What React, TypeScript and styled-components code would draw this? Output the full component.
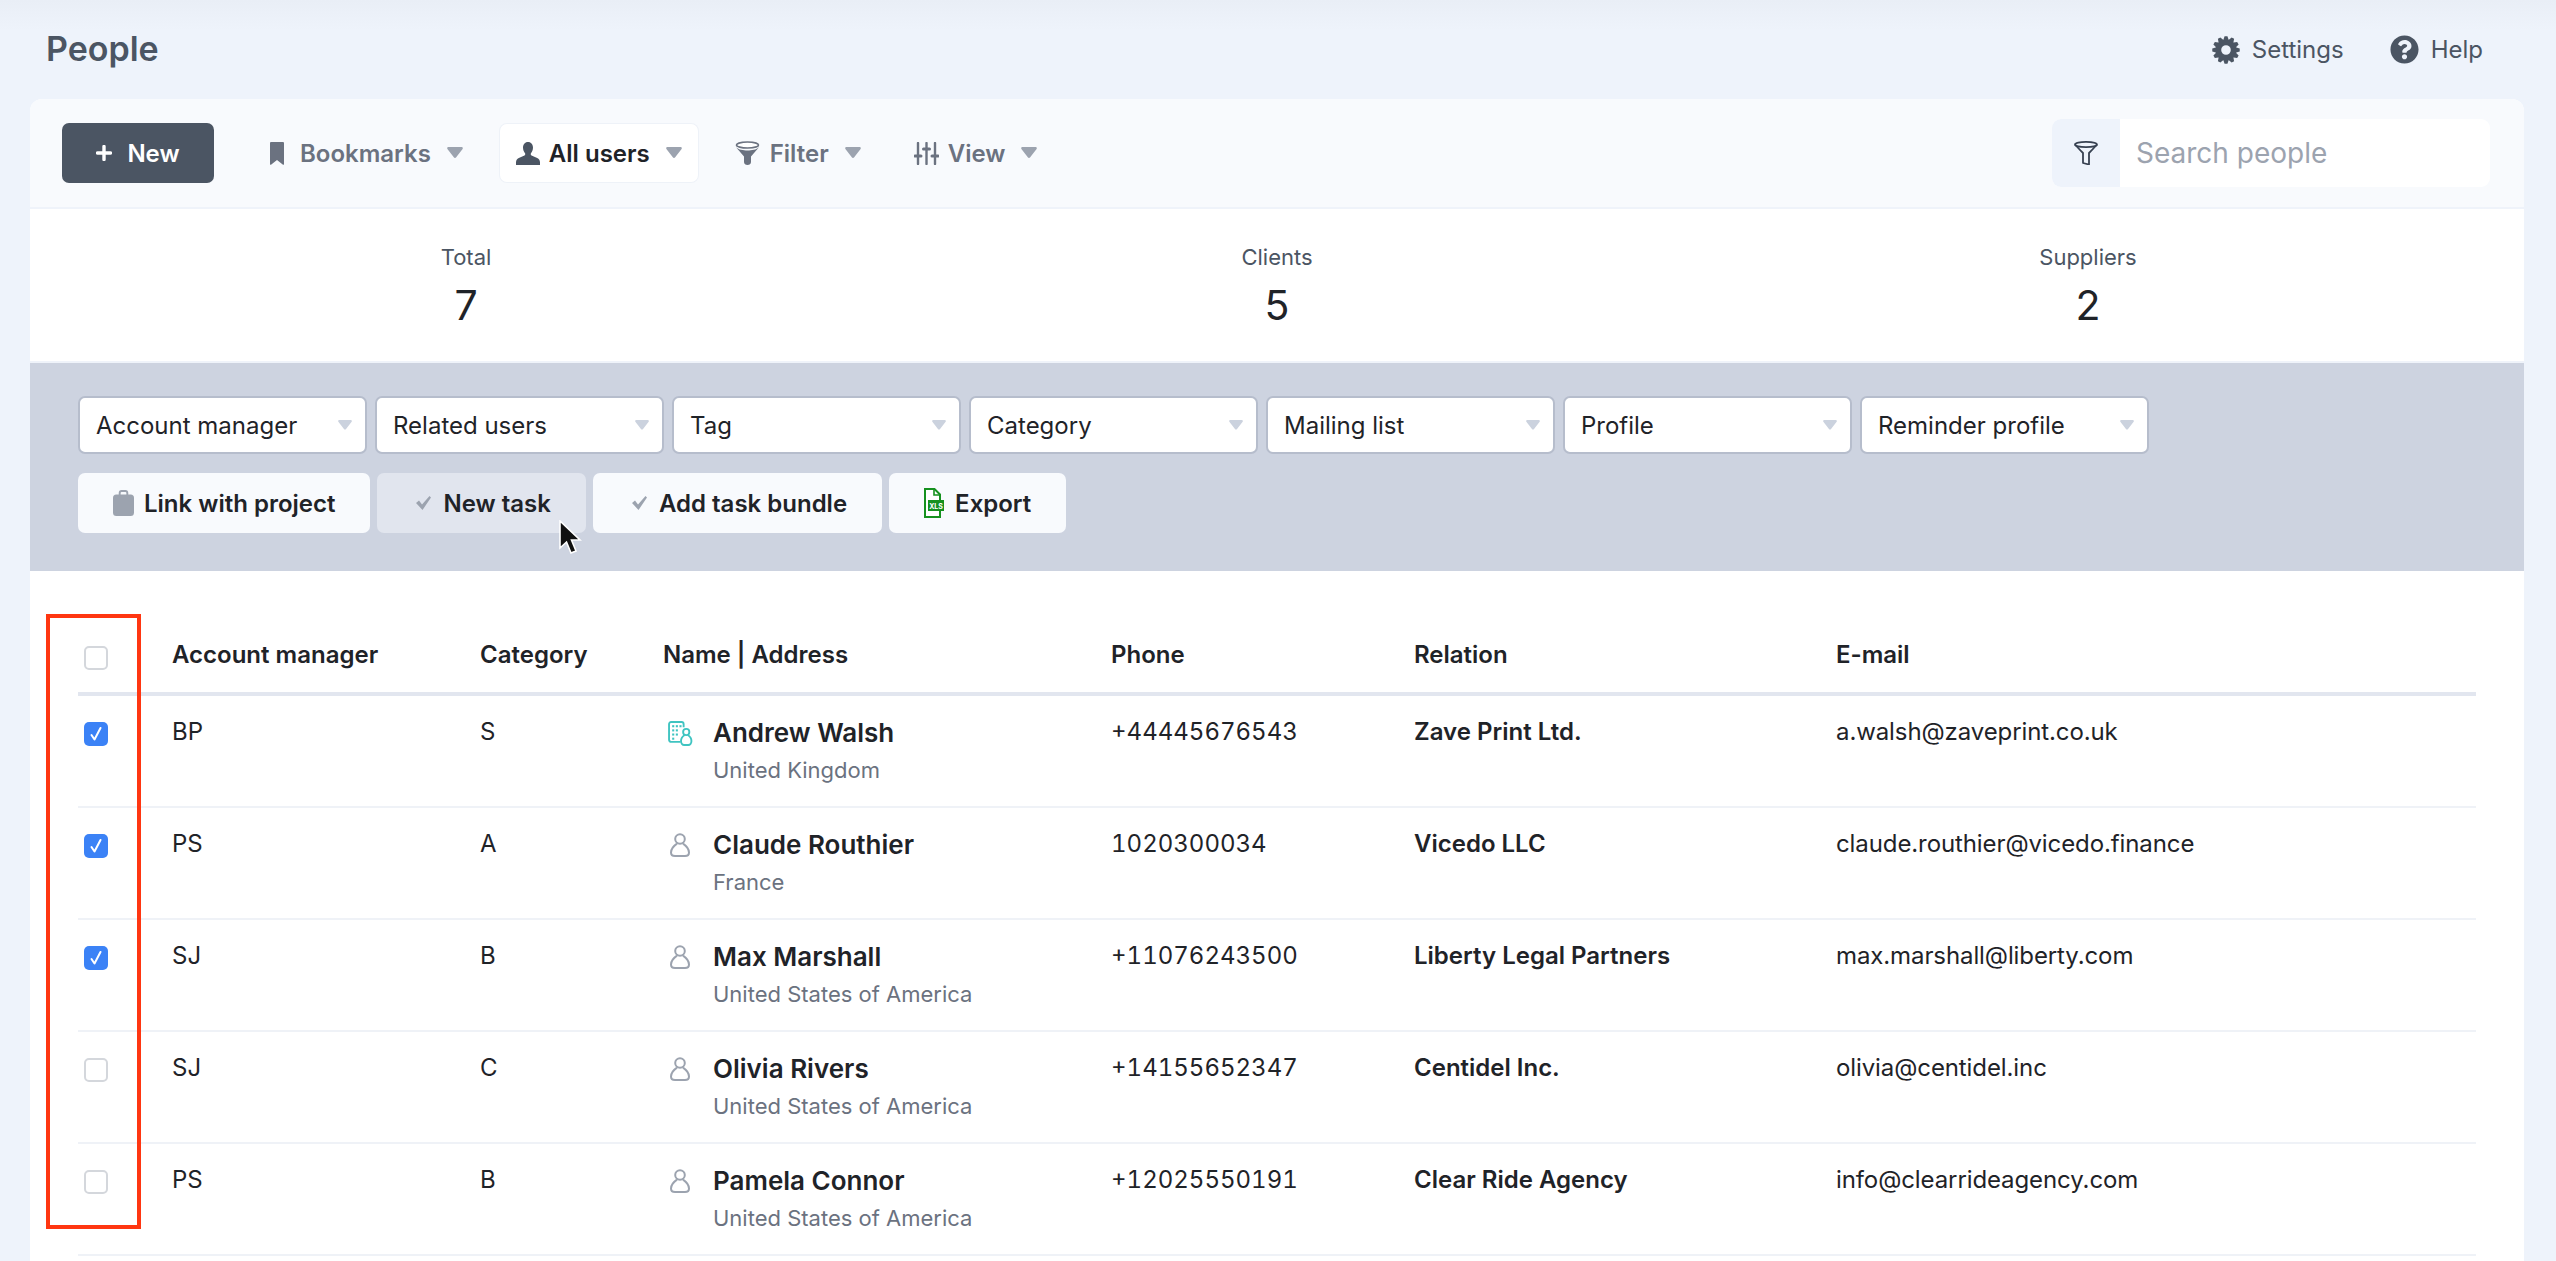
import React from "react";
import styled, { createGlobalStyle } from "styled-components";
import { FaQuestionCircle } from "react-icons/fa";

const GlobalStyle = createGlobalStyle`
  html, body {
    margin: 0;
    height: 100%;
    overflow: hidden;
    background: #eef3fb;
    font-family: Inter, "Liberation Sans", sans-serif;
    color: #1f2328;
  }
  * { box-sizing: border-box; }
`;

const Page = styled.div`
  position: relative;
  height: 1261px;
  background: linear-gradient(#e9eef6 0, #eef3fb 30px);
  overflow: hidden;
`;

const TopBar = styled.header`
  height: 99px;
  padding: 0 73px 0 46px;
  display: flex;
  align-items: center;
  justify-content: space-between;
`;

const Title = styled.h1`
  margin: -2px 0 0;
  font-size: 34px;
  font-weight: 600;
  color: #4b5563;
`;

const TopLinks = styled.nav`
  display: flex;
  align-items: center;
  gap: 46px;
`;

const TopLink = styled.a`
  display: flex;
  align-items: center;
  gap: 12px;
  font-size: 24px;
  color: #4b5563;
`;

const Panel = styled.main`
  margin: 0 32px 0 30px;
  background: #fff;
  border-radius: 12px 12px 0 0;
  height: 1162px;
  overflow: hidden;
`;

const Toolbar = styled.div`
  height: 110px;
  padding: 0 34px 0 32px;
  display: flex;
  align-items: center;
  gap: 21px;
  background: #f8fafd;
  border-bottom: 2px solid #eff3fa;
`;

const NewButton = styled.button`
  width: 152px;
  height: 60px;
  margin-right: 19px;
  border: 0;
  border-radius: 7px;
  background: #4b5563;
  color: #fff;
  font: 600 24px Inter, sans-serif;
  display: flex;
  align-items: center;
  justify-content: center;
  gap: 15px;
`;

const ViewTab = styled.div<{ $active?: boolean }>`
  height: 58px;
  display: flex;
  align-items: center;
  padding: 0 16px;
  gap: 9px;
  border-radius: 7px;
  font-size: 24px;
  font-weight: 600;
  color: ${(p) => (p.$active ? "#1f2328" : "#6b7280")};
  background: ${(p) => (p.$active ? "#fff" : "transparent")};
  box-shadow: ${(p) => (p.$active ? "0 0 0 1px #eef2f8" : "none")};
`;

const TabLabel = styled.span`
  margin-right: 7px;
`;

const SearchBox = styled.div`
  margin-left: auto;
  width: 438px;
  height: 68px;
  display: flex;
  border-radius: 9px;
  overflow: hidden;
  background: #fff;
`;

const SearchAddon = styled.div`
  width: 68px;
  display: flex;
  align-items: center;
  justify-content: center;
  background: #eef3fb;
`;

const SearchText = styled.div`
  padding-left: 16px;
  display: flex;
  align-items: center;
  font-size: 28px;
  color: #9ca3af;
`;

const Stats = styled.section`
  height: 154px;
  padding: 1px 30.5px 0;
  display: grid;
  grid-template-columns: repeat(3, 1fr);
  align-items: center;
  text-align: center;
  border-bottom: 2px solid #eff3fa;
`;

const StatLabel = styled.div`
  font-size: 22px;
  line-height: 30px;
  color: #4b5563;
`;

const StatValue = styled.div`
  margin-top: 9px;
  font-size: 41px;
  line-height: 48px;
  color: #1f2328;
`;

const FilterBand = styled.section`
  height: 208px;
  padding: 33px 49px 0 48px;
  background: #cdd3e0;
`;

const SelectRow = styled.div`
  display: flex;
  gap: 8px;
`;

const FilterSelect = styled.div`
  width: 289px;
  height: 58px;
  padding: 0 13px 0 16px;
  display: flex;
  align-items: center;
  justify-content: space-between;
  background: #fff;
  border: 2px solid #b6bdcc;
  border-radius: 7px;
  font-size: 24px;
  color: #1f2328;
`;

const ActionRow = styled.div`
  margin-top: 19px;
  display: flex;
  gap: 7px;
`;

const ActionButton = styled.button<{ $hover?: boolean }>`
  height: 60px;
  padding: 0 35px;
  border: 0;
  border-radius: 7px;
  display: flex;
  align-items: center;
  gap: 10px;
  background: ${(p) => (p.$hover ? "#e1e5ee" : "#f8fafd")};
  color: #1f2328;
  font: 600 24px Inter, sans-serif;
`;

const TableWrap = styled.section`
  padding: 45px 48px 0;
`;

const columns = "94px 308px 183px 448px 303px 422px 1fr";

const HeadRow = styled.div`
  height: 80px;
  display: grid;
  grid-template-columns: ${columns};
  align-items: center;
  border-bottom: 4px solid #e2e6ef;
  font-size: 24px;
  font-weight: 600;
  color: #1f2328;
`;

const BodyRow = styled.div`
  height: 112px;
  padding-top: 20px;
  display: grid;
  grid-template-columns: ${columns};
  align-items: start;
  border-bottom: 2px solid #eff2f7;
  font-size: 24px;
  line-height: 32px;
  color: #1f2328;
`;

const CheckCell = styled.div`
  padding-left: 6px;
  display: flex;
`;

const Box = styled.span<{ $on?: boolean }>`
  width: 24px;
  height: 24px;
  margin-top: ${(p) => (p.$on === undefined ? "7px" : "6px")};
  border-radius: 5px;
  display: flex;
  align-items: center;
  justify-content: center;
  background: ${(p) => (p.$on ? "#3b82f6" : "#fff")};
  border: ${(p) => (p.$on ? "0" : "2px solid #d4d7dc")};
`;

const NameCell = styled.div`
  display: flex;
  gap: 16px;
`;

const IconSlot = styled.div`
  width: 34px;
  margin-top: 5px;
  display: flex;
  justify-content: center;
`;

const PersonName = styled.div`
  font-size: 26px;
  font-weight: 600;
  line-height: 34px;
  color: #1f2328;
`;

const Country = styled.div`
  margin-top: 5px;
  font-size: 22px;
  line-height: 30px;
  color: #6b7280;
`;

const Phone = styled.div`
  font-variant-numeric: tabular-nums;
`;

const Company = styled.div`
  font-weight: 600;
`;

const Mail = styled.div`
  letter-spacing: -0.1px;
`;

const Marker = styled.div`
  position: absolute;
  left: 46px;
  top: 614px;
  width: 95px;
  height: 615px;
  border: 4px solid #ff3611;
  pointer-events: none;
`;

const Pointer = styled.svg`
  position: absolute;
  left: 558px;
  top: 520px;
`;

const Caret = ({ color = "#9ca3af", size = 16 }: { color?: string; size?: number }) => (
  <svg width={size} height={size * 0.7} viewBox="0 0 16 11">
    <path d="M1.5 0h13c1 0 1.7 1 1.1 1.9L9.2 10.2c-.6.8-1.8.8-2.4 0L.4 1.9C-.2 1 .5 0 1.5 0z" fill={color} />
  </svg>
);

const PlusIcon = () => (
  <svg width="16" height="16" viewBox="0 0 16 16">
    <path d="M8 1.5v13M1.5 8h13" stroke="#fff" strokeWidth="3.4" strokeLinecap="round" />
  </svg>
);

const BookmarkIcon = () => (
  <svg width="21" height="23" viewBox="0 0 21 23">
    <path d="M1 0h12a1 1 0 0 1 1 1v21.2a.6.6 0 0 1-1 .5L7 18l-6 4.7a.6.6 0 0 1-1-.5V1a1 1 0 0 1 1-1z" fill="#6b7280" />
  </svg>
);

const BustIcon = () => (
  <svg width="24" height="23" viewBox="0 0 24 23">
    <path
      d="M12 0c3.2 0 5 2.500 5 5.600 0 2.400-.9 4.400-2 5.700-.5.7-.3 1.700.5 2.100l5.700 2.700c1.800.9 2.800 2.300 2.800 4.300V23H0v-2.600c0-2 1-3.400 2.800-4.300l5.700-2.700c.8-.4 1-1.400.5-2.100-1.100-1.300-2-3.300-2-5.700C7 2.500 8.800 0 12 0z"
      fill="#4b5563"
    />
  </svg>
);

const FunnelIcon = () => (
  <svg width="26" height="24" viewBox="0 0 26 24">
    <ellipse cx="12.500" cy="4" rx="11" ry="3" fill="#fff" stroke="#6b7280" strokeWidth="1.600" />
    <path d="M.8 6c3 3 7.400 3.400 11.700 3.400S21.200 9 24.200 6L16 15.500V21c0 1.800-1.500 3-3.500 3S9 22.800 9 21v-5.500L.8 6z" fill="#6b7280" />
  </svg>
);

const SlidersIcon = () => (
  <svg width="25" height="23" viewBox="0 0 25 23">
    <g stroke="#6b7280" strokeLinecap="round">
      <path d="M4 1v21M12.500 1v21M21 1v21" strokeWidth="2.400" />
      <path d="M1 14h6M9.500 7h6M18 14h6" strokeWidth="3" />
    </g>
  </svg>
);

const GearIcon = () => {
  const pts: string[] = [];
  const teeth = 12;
  for (let i = 0; i < teeth; i++) {
    const a = (i / teeth) * Math.PI * 2;
    const step = Math.PI / teeth;
    [
      [10.6, a - step * 0.95],
      [13.8, a - step * 0.4],
      [13.8, a + step * 0.4],
      [10.6, a + step * 0.95],
    ].forEach(([r, t]) => pts.push(`${(14 + r * Math.cos(t)).toFixed(2)},${(14 + r * Math.sin(t)).toFixed(2)}`));
  }
  return (
    <svg width="28" height="28" viewBox="0 0 28 28">
      <path d={`M${pts.join("L")}Z M14 9.200a4.800 4.800 0 1 0 0 9.600a4.800 4.800 0 1 0 0-9.600Z`} fill="#4b5563" fillRule="evenodd" />
    </svg>
  );
};

const SearchFunnel = () => (
  <svg width="24" height="24" viewBox="0 0 24 24" fill="none" stroke="#374151" strokeWidth="1.800" strokeLinejoin="round">
    <ellipse cx="12" cy="3.500" rx="11" ry="2.600" />
    <path d="M1 3.500c1 1 2.500 3 8 8.500v10l6 1.500V12c5.500-5.500 7-7.500 8-8.500" />
  </svg>
);

const CaseIcon = () => (
  <svg width="21" height="26" viewBox="0 0 22 26" preserveAspectRatio="none">
    <path d="M7 5V3a2 2 0 0 1 2-2h4a2 2 0 0 1 2 2v2" fill="none" stroke="#9ca3af" strokeWidth="2" />
    <rect x="0" y="4.500" width="22" height="21.500" rx="3.500" fill="#9ca3af" />
  </svg>
);

const TickIcon = () => (
  <svg width="21" height="14" viewBox="-4 0 21 14">
    <path d="M0 7l3-2.500L6 8.500 13.500 0 15 1.500 6.500 14z" fill="#9ca3af" />
  </svg>
);

const SheetIcon = () => (
  <svg width="21" height="30" viewBox="0 0 21 30">
    <path d="M1 1h9.500L16 6.500V29H1z" fill="#fff" stroke="#16911f" strokeWidth="2" />
    <path d="M10 1v6h6" fill="none" stroke="#16911f" strokeWidth="1.600" />
    <rect x="4" y="12" width="16" height="11" fill="#16911f" />
    <text x="12" y="20.500" textAnchor="middle" fontSize="7" fontWeight="700" fill="#fff" fontFamily="Inter, sans-serif">
      XLS
    </text>
  </svg>
);

const PersonIcon = () => (
  <svg width="20" height="24" viewBox="0 0 20 24" fill="none" stroke="#9ca3af" strokeWidth="2">
    <circle cx="10" cy="6" r="4.800" />
    <path d="M7 10.600C3.500 13 1 16.500 1 19.500 1 22 3 23 5 23h10c2 0 4-1 4-3.500 0-3-2.500-6.500-6-8.900" />
  </svg>
);

const CompanyIcon = () => (
  <svg width="25" height="25" viewBox="0 0 24 24" fill="none" stroke="#3fc4c1" strokeWidth="1.800">
    <path d="M12 20H3a2 2 0 0 1-2-2V3a2 2 0 0 1 2-2h10a2 2 0 0 1 2 2v3" />
    <g stroke="none" fill="#3fc4c1">
      <rect x="4" y="4" width="2" height="2" />
      <rect x="7.500" y="4" width="2" height="2" />
      <rect x="11" y="4" width="2" height="2" />
      <rect x="4" y="8" width="2" height="2" />
      <rect x="7.500" y="8" width="2" height="2" />
      <rect x="4" y="12" width="2" height="2" />
      <rect x="7.500" y="12" width="2" height="2" />
      <rect x="4" y="16" width="2" height="2" />
    </g>
    <circle cx="17.500" cy="10.500" r="3" />
    <path d="M16 13.500c-2 1.300-3.500 3.500-3.500 5.800 0 2 1.300 3.700 3 3.700h4c1.700 0 3-1.700 3-3.700 0-2.300-1.500-4.500-3.500-5.800" />
  </svg>
);

const CheckMark = () => (
  <svg width="14" height="16" viewBox="0 0 14 16">
    <path d="M2.500 9l3 4.500L11.500 2" fill="none" stroke="#fff" strokeWidth="2" strokeLinecap="round" strokeLinejoin="round" />
  </svg>
);

const filters = ["Account manager", "Related users", "Tag", "Category", "Mailing list", "Profile", "Reminder profile"];

const people = [
  { am: "BP", cat: "S", name: "Andrew Walsh", country: "United Kingdom", phone: "+44445676543", rel: "Zave Print Ltd.", mail: "a.walsh@zaveprint.co.uk", on: true, org: true },
  { am: "PS", cat: "A", name: "Claude Routhier", country: "France", phone: "1020300034", rel: "Vicedo LLC", mail: "claude.routhier@vicedo.finance", on: true },
  { am: "SJ", cat: "B", name: "Max Marshall", country: "United States of America", phone: "+11076243500", rel: "Liberty Legal Partners", mail: "max.marshall@liberty.com", on: true },
  { am: "SJ", cat: "C", name: "Olivia Rivers", country: "United States of America", phone: "+14155652347", rel: "Centidel Inc.", mail: "olivia@centidel.inc", on: false },
  { am: "PS", cat: "B", name: "Pamela Connor", country: "United States of America", phone: "+12025550191", rel: "Clear Ride Agency", mail: "info@clearrideagency.com", on: false },
];

const App = () => {
  return (
    <Page>
      <GlobalStyle />
      <TopBar>
        <Title>People</Title>
        <TopLinks>
          <TopLink>
            <GearIcon />
            Settings
          </TopLink>
          <TopLink>
            <FaQuestionCircle size={29} color="#4b5563" />
            Help
          </TopLink>
        </TopLinks>
      </TopBar>

      <Panel>
        <Toolbar>
          <NewButton>
            <PlusIcon />
            New
          </NewButton>
          <ViewTab>
            <BookmarkIcon />
            <TabLabel>Bookmarks</TabLabel>
            <Caret />
          </ViewTab>
          <ViewTab $active>
            <BustIcon />
            <TabLabel>All users</TabLabel>
            <Caret />
          </ViewTab>
          <ViewTab>
            <FunnelIcon />
            <TabLabel>Filter</TabLabel>
            <Caret />
          </ViewTab>
          <ViewTab>
            <SlidersIcon />
            <TabLabel>View</TabLabel>
            <Caret />
          </ViewTab>
          <SearchBox>
            <SearchAddon>
              <SearchFunnel />
            </SearchAddon>
            <SearchText>Search people</SearchText>
          </SearchBox>
        </Toolbar>

        <Stats>
          <div>
            <StatLabel>Total</StatLabel>
            <StatValue>7</StatValue>
          </div>
          <div>
            <StatLabel>Clients</StatLabel>
            <StatValue>5</StatValue>
          </div>
          <div>
            <StatLabel>Suppliers</StatLabel>
            <StatValue>2</StatValue>
          </div>
        </Stats>

        <FilterBand>
          <SelectRow>
            {filters.map((f) => (
              <FilterSelect key={f}>
                {f}
                <Caret color="#cbd2de" size={14} />
              </FilterSelect>
            ))}
          </SelectRow>
          <ActionRow>
            <ActionButton>
              <CaseIcon />
              Link with project
            </ActionButton>
            <ActionButton $hover>
              <TickIcon />
              New task
            </ActionButton>
            <ActionButton>
              <TickIcon />
              Add task bundle
            </ActionButton>
            <ActionButton>
              <SheetIcon />
              Export
            </ActionButton>
          </ActionRow>
        </FilterBand>

        <TableWrap>
          <HeadRow>
            <CheckCell>
              <Box />
            </CheckCell>
            <div>Account manager</div>
            <div>Category</div>
            <div>Name | Address</div>
            <div>Phone</div>
            <div>Relation</div>
            <div>E-mail</div>
          </HeadRow>
          {people.map((p) => (
            <BodyRow key={p.name}>
              <CheckCell>
                <Box $on={p.on}>{p.on && <CheckMark />}</Box>
              </CheckCell>
              <div>{p.am}</div>
              <div>{p.cat}</div>
              <NameCell>
                <IconSlot>{p.org ? <CompanyIcon /> : <PersonIcon />}</IconSlot>
                <div>
                  <PersonName>{p.name}</PersonName>
                  <Country>{p.country}</Country>
                </div>
              </NameCell>
              <Phone>{p.phone}</Phone>
              <Company>{p.rel}</Company>
              <Mail>{p.mail}</Mail>
            </BodyRow>
          ))}
        </TableWrap>
      </Panel>

      <Marker />
      <Pointer width="26" height="38" viewBox="0 0 26 38">
        <path d="M2 1v27l6.500-6 4.500 11 5-2-4.500-11H22z" fill="#111" stroke="#fff" strokeWidth="1.600" />
      </Pointer>
    </Page>
  );
};

export default App;
